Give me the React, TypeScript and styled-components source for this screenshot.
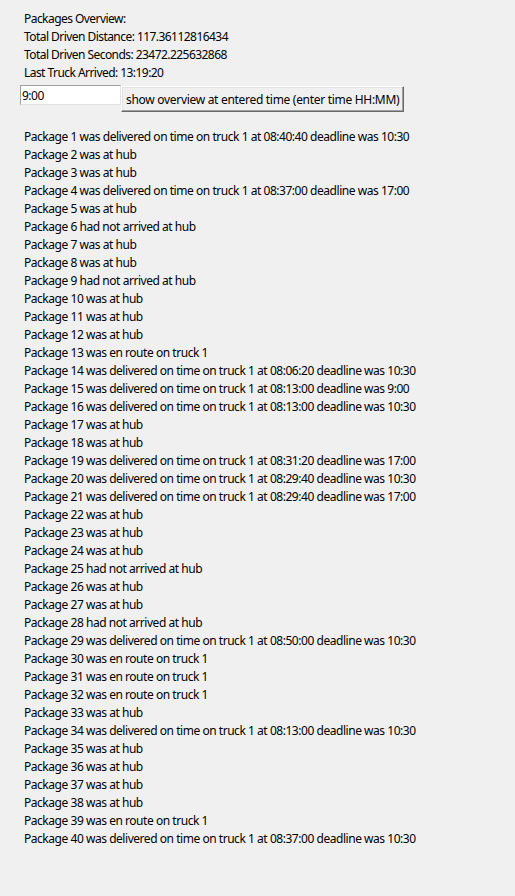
import React from "react";
import styled, { createGlobalStyle } from "styled-components";

const Global = createGlobalStyle`
  html, body { margin: 0; padding: 0; background: #f0f0f0; }
  body { font-family: "Noto Sans", "Open Sans", sans-serif; font-size: 12px; color: #000; }
`;

const Window = styled.div`
  width: 515px;
  height: 896px;
  background: #f0f0f0;
  box-sizing: border-box;
  padding-top: 10px;
  display: flex;
  flex-direction: column;
`;

const Line = styled.div<{ $tight?: boolean }>`
  height: 18px;
  line-height: 18px;
  padding-left: 24px;
  white-space: nowrap;
  letter-spacing: ${(p) => (p.$tight ? "-0.55px" : "-0.46px")};
`;

const Controls = styled.div`
  display: flex;
  align-items: flex-start;
  margin-top: 3px;
  padding-left: 20px;
  height: 26px;
`;

const Entry = styled.input`
  box-sizing: border-box;
  width: 101px;
  height: 20px;
  margin: 0;
  padding: 0 1px;
  border: 1px solid;
  border-color: #a0a0a0 #e3e3e3 #e3e3e3 #a0a0a0;
  background: #fff;
  font-family: "Noto Sans", sans-serif;
  font-size: 12px;
  letter-spacing: -0.5px;
  outline: none;
`;

const Button = styled.button`
  box-sizing: border-box;
  height: 26px;
  margin: 1px 0 0 0;
  padding: 0 4px;
  background: #f0f0f0;
  border: 1px solid;
  border-color: #ffffff #696969 #696969 #ffffff;
  box-shadow: inset -1px -1px 0 #a0a0a0, inset 1px 1px 0 #e3e3e3;
  font-family: "Noto Sans", sans-serif;
  font-size: 12px;
  letter-spacing: -0.3px;
  color: #000;
  white-space: nowrap;
`;

const List = styled.div`
  margin-top: 17px;
  display: flex;
  flex-direction: column;
`;

const packages: string[] = [
  "Package 1 was delivered on time on truck 1 at 08:40:40 deadline was 10:30",
  "Package 2 was at hub",
  "Package 3 was at hub",
  "Package 4 was delivered on time on truck 1 at 08:37:00 deadline was 17:00",
  "Package 5 was at hub",
  "Package 6 had not arrived at hub",
  "Package 7 was at hub",
  "Package 8 was at hub",
  "Package 9 had not arrived at hub",
  "Package 10 was at hub",
  "Package 11 was at hub",
  "Package 12 was at hub",
  "Package 13 was en route on truck 1",
  "Package 14 was delivered on time on truck 1 at 08:06:20 deadline was 10:30",
  "Package 15 was delivered on time on truck 1 at 08:13:00 deadline was 9:00",
  "Package 16 was delivered on time on truck 1 at 08:13:00 deadline was 10:30",
  "Package 17 was at hub",
  "Package 18 was at hub",
  "Package 19 was delivered on time on truck 1 at 08:31:20 deadline was 17:00",
  "Package 20 was delivered on time on truck 1 at 08:29:40 deadline was 10:30",
  "Package 21 was delivered on time on truck 1 at 08:29:40 deadline was 17:00",
  "Package 22 was at hub",
  "Package 23 was at hub",
  "Package 24 was at hub",
  "Package 25 had not arrived at hub",
  "Package 26 was at hub",
  "Package 27 was at hub",
  "Package 28 had not arrived at hub",
  "Package 29 was delivered on time on truck 1 at 08:50:00 deadline was 10:30",
  "Package 30 was en route on truck 1",
  "Package 31 was en route on truck 1",
  "Package 32 was en route on truck 1",
  "Package 33 was at hub",
  "Package 34 was delivered on time on truck 1 at 08:13:00 deadline was 10:30",
  "Package 35 was at hub",
  "Package 36 was at hub",
  "Package 37 was at hub",
  "Package 38 was at hub",
  "Package 39 was en route on truck 1",
  "Package 40 was delivered on time on truck 1 at 08:37:00 deadline was 10:30",
];

export default function App() {
  return (
    <Window>
      <Global />
      <Line $tight>Packages Overview:</Line>
      <Line $tight>Total Driven Distance: 117.36112816434</Line>
      <Line $tight>Total Driven Seconds: 23472.225632868</Line>
      <Line $tight>Last Truck Arrived: 13:19:20</Line>
      <Controls>
        <Entry defaultValue="9:00" />
        <Button>show overview at entered time (enter time HH:MM)</Button>
      </Controls>
      <List>
        {packages.map((p) => (
          <Line key={p}>{p}</Line>
        ))}
      </List>
    </Window>
  );
}
